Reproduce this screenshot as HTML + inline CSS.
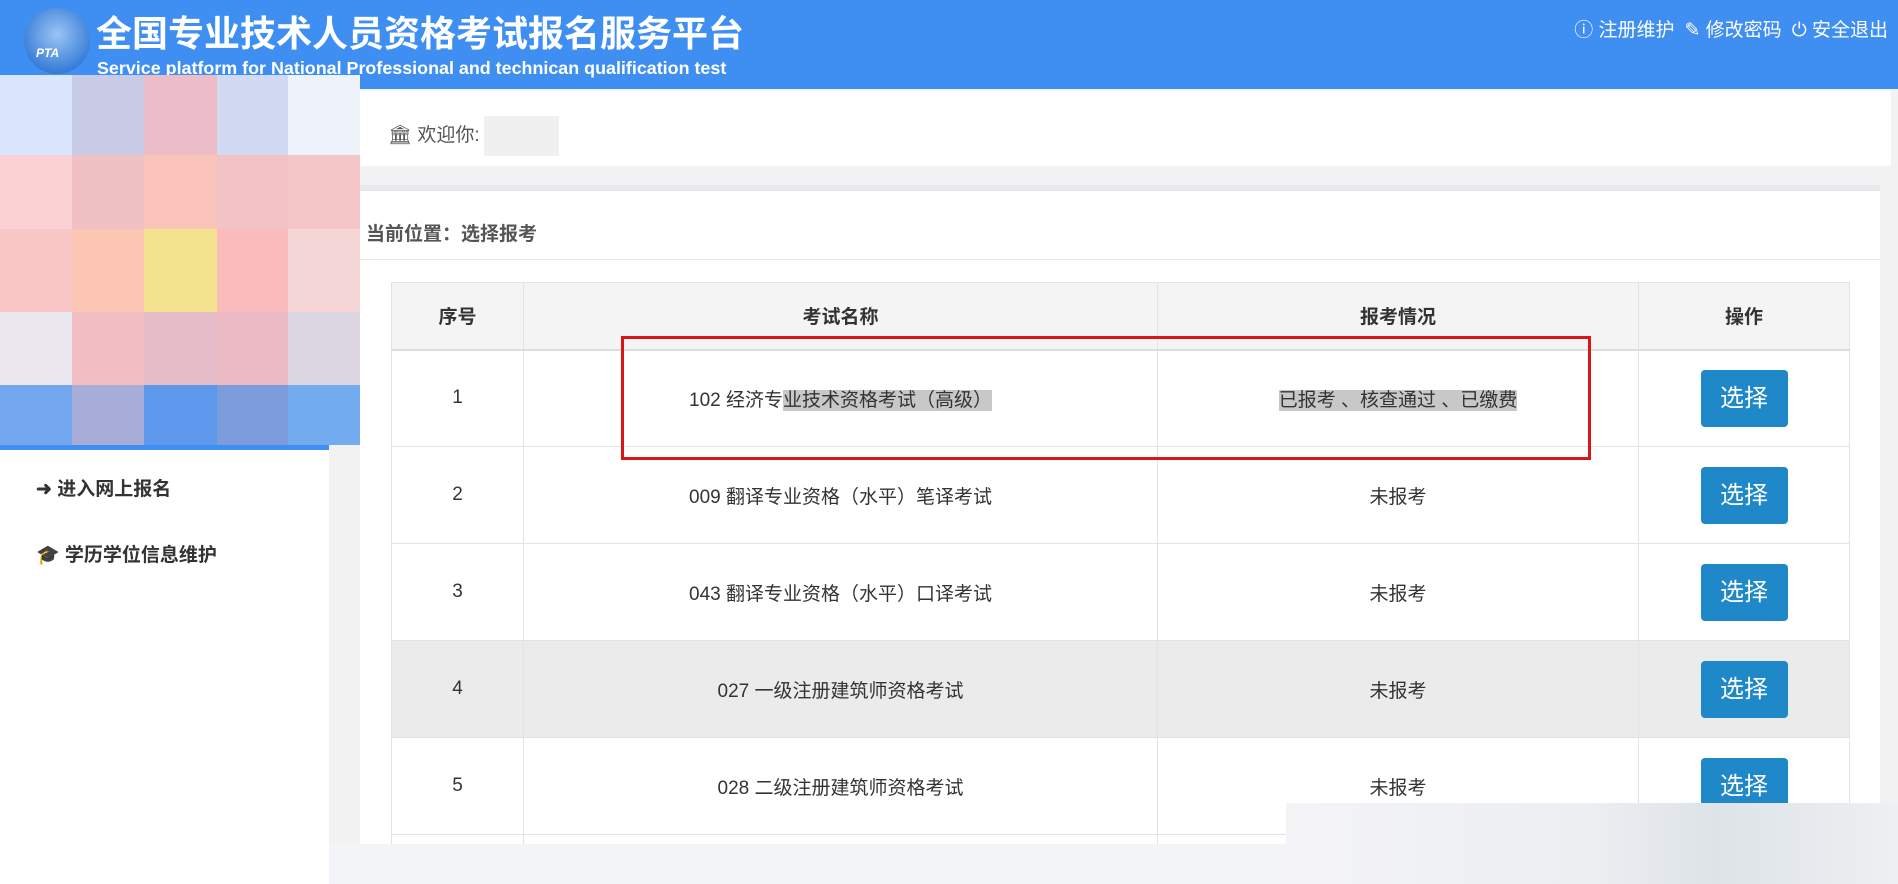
<!DOCTYPE html>
<html style="width:1898px;height:884px;overflow:hidden"><head><meta charset="utf-8"><style>
*{margin:0;padding:0;box-sizing:border-box}
body{width:1898px;height:884px;overflow:hidden;background:#f2f2f2;font-family:"Liberation Sans","Noto Sans CJK SC",sans-serif;position:relative;color:#333}
.hdr{position:absolute;left:0;top:0;width:1898px;height:89px;background:#3f8ff3}
.logo{position:absolute;left:24px;top:8px;width:66px;height:66px;border-radius:50%;background:radial-gradient(circle at 50% 40%,#9cc4f5,#3a7fd8 70%,#2a66c0);}
.logo span{position:absolute;left:12px;top:38px;color:#fff;font:italic bold 12px "Liberation Sans",sans-serif}
.t1{position:absolute;left:96px;top:5px;color:#fff;font-size:36px;font-weight:bold;white-space:nowrap}
.t2{position:absolute;left:97px;top:58px;color:#fff;font-size:17.9px;font-weight:bold;white-space:nowrap}
.tr{position:absolute;right:10px;top:15px;color:#fff;font-size:19px;white-space:nowrap}
.tr b{font-weight:normal;margin-left:10px}
.side{position:absolute;left:0;top:89px;width:329px;height:795px;background:#fff}
.blur{position:absolute;left:0;top:75px;width:360px;height:370px;display:grid;grid-template-columns:72px 72px 73px 71px 72px;grid-template-rows:80px 74px 83px 73px 60px}
.bl{position:absolute;left:0;top:445px;width:329px;height:5px;background:#3f8ff3}
.nav{position:absolute;left:36px;font-size:19px;font-weight:bold;color:#333}
.welcome{position:absolute;left:360px;top:91px;width:1531px;height:75px;background:#fff;font-size:19px;color:#555;padding:25px 0 0 28px}
.panel{position:absolute;left:360px;top:185px;width:1520px;height:700px;background:#fff;border-top:6px solid #e6e8eb}
.crumb{position:absolute;left:6px;top:28px;font-size:19px;font-weight:bold;color:#555}
.line{position:absolute;left:0;top:68px;width:100%;height:1px;background:#e5e5e5}
table{position:absolute;left:391px;top:282px;width:1459px;border-collapse:collapse;font-size:19px;color:#333}
td,th{border:1px solid #e3e3e3;text-align:center;height:97px;vertical-align:middle}
th{height:67px;background:#f4f4f4;font-weight:bold;border-bottom:2px solid #ddd}
tr.g td{background:#ebebeb}
tr.last td{height:30px}
.btn{display:inline-block;width:87px;height:57px;line-height:57px;background:#1e88c9;color:#fff;font-size:24px;border-radius:4px}
.hl{background:#c8c8c8}
.red{position:absolute;left:621px;top:336px;width:970px;height:124px;border:3px solid #d9151a}
.foot{position:absolute;left:329px;top:844px;width:1569px;height:40px;background:#f3f4f7}
.bb{position:absolute;left:1286px;top:803px;width:612px;height:81px;background:linear-gradient(90deg,#f4f4f6,#eceef1 50%,#dde3e8 70%,#eef0f2)}
</style></head><body>
<div class="hdr">
<div class="logo"><span>PTA</span></div>
<div class="t1">全国专业技术人员资格考试报名服务平台</div>
<div class="t2">Service platform for National Professional and technican qualification test</div>
<div class="tr">ⓘ 注册维护<b>✎ 修改密码</b><b>⏻ 安全退出</b></div>
</div>
<div class="side"></div>
<div class="blur">
<div style="background:#d9e6fb"></div><div style="background:#c9cbe6"></div><div style="background:#ecbcc8"></div><div style="background:#d1daf2"></div><div style="background:#eef3fb"></div>
<div style="background:#fbd0d2"></div><div style="background:#efc0c4"></div><div style="background:#f9c3b9"></div><div style="background:#f2c2c6"></div><div style="background:#f5c6c7"></div>
<div style="background:#fbc6c6"></div><div style="background:#fbc6b3"></div><div style="background:#f2e28e"></div><div style="background:#f9bbbc"></div><div style="background:#f4d6d7"></div>
<div style="background:#ebe7ef"></div><div style="background:#f4bfc4"></div><div style="background:#e6bcc8"></div><div style="background:#ebbac4"></div><div style="background:#dbd6e2"></div>
<div style="background:#72a6ee"></div><div style="background:#a8acd8"></div><div style="background:#5d98ec"></div><div style="background:#7d9cdc"></div><div style="background:#72abee"></div>
</div>
<div class="bl"></div>
<div class="nav" style="top:474px">➜ 进入网上报名</div>
<div class="nav" style="top:540px">🎓 学历学位信息维护</div>
<div class="welcome">🏛 欢迎你:<span style="display:inline-block;width:75px;height:40px;background:#f0f0f0;vertical-align:middle;margin-left:4px"></span></div>
<div class="panel"><div class="crumb">当前位置：选择报考</div><div class="line"></div></div>
<table>
<tr><th style="width:132px">序号</th><th style="width:634px">考试名称</th><th style="width:481px">报考情况</th><th>操作</th></tr>
<tr><td>1</td><td>102 经济专<span class="hl">业技术资格考试（高级）</span></td><td><span class="hl">已报考 、核查通过 、已缴费</span></td><td><span class="btn">选择</span></td></tr>
<tr><td>2</td><td>009 翻译专业资格（水平）笔译考试</td><td>未报考</td><td><span class="btn">选择</span></td></tr>
<tr><td>3</td><td>043 翻译专业资格（水平）口译考试</td><td>未报考</td><td><span class="btn">选择</span></td></tr>
<tr class="g"><td>4</td><td>027 一级注册建筑师资格考试</td><td>未报考</td><td><span class="btn">选择</span></td></tr>
<tr><td>5</td><td>028 二级注册建筑师资格考试</td><td>未报考</td><td><span class="btn">选择</span></td></tr>
<tr class="last"><td></td><td></td><td></td><td></td></tr>
</table>
<div class="red"></div>
<div class="foot"></div>
<div class="bb"></div>
</body></html>
